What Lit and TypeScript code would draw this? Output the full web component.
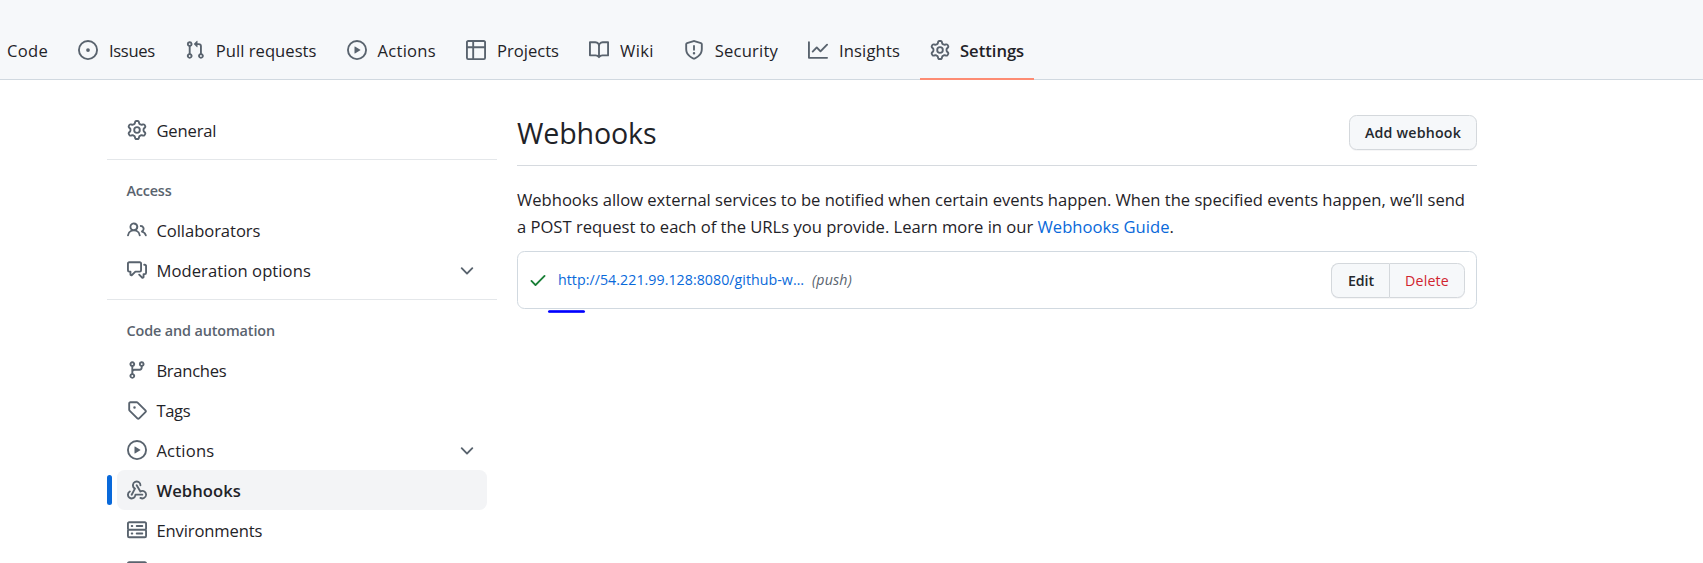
import { LitElement, html, css, svg } from "lit";
import { customElement, property } from "lit/decorators.js";

const ICONS: Record<string, string> = {
  issue: "M8 9.5a1.5 1.5 0 1 0 0-3 1.5 1.5 0 0 0 0 3ZM8 0a8 8 0 1 1 0 16A8 8 0 0 1 8 0ZM1.5 8a6.5 6.5 0 1 0 13 0 6.5 6.5 0 0 0-13 0Z",
  pull: "M1.5 3.25a2.25 2.25 0 1 1 3 2.122v5.256a2.251 2.251 0 1 1-1.5 0V5.372A2.25 2.25 0 0 1 1.5 3.25Zm5.677-.177L9.573.677A.25.25 0 0 1 10 .854V2.5h1A2.5 2.5 0 0 1 13.5 5v5.628a2.251 2.251 0 1 1-1.5 0V5a1 1 0 0 0-1-1h-1v1.646a.25.25 0 0 1-.427.177L7.177 3.427a.25.25 0 0 1 0-.354ZM3.75 2.5a.75.75 0 1 0 0 1.5.75.75 0 0 0 0-1.5Zm0 9.5a.75.75 0 1 0 0 1.5.75.75 0 0 0 0-1.5Zm8.25.75a.75.75 0 1 0 1.5 0 .75.75 0 0 0-1.5 0Z",
  play: "M8 0a8 8 0 1 1 0 16A8 8 0 0 1 8 0ZM1.5 8a6.5 6.5 0 1 0 13 0 6.5 6.5 0 0 0-13 0Zm4.879-2.773 4.264 2.559a.25.25 0 0 1 0 .428l-4.264 2.559A.25.25 0 0 1 6 10.559V5.442a.25.25 0 0 1 .379-.215Z",
  table: "M0 1.75C0 .784.784 0 1.75 0h12.5C15.216 0 16 .784 16 1.75v12.5A1.75 1.75 0 0 1 14.25 16H1.75A1.75 1.75 0 0 1 0 14.25ZM6.5 6.5v8h7.75a.25.25 0 0 0 .25-.25V6.5Zm8-1.5V1.75a.25.25 0 0 0-.25-.25H6.5V5Zm-13 1.5v7.75c0 .138.112.25.25.25H5v-8ZM5 5V1.5H1.75a.25.25 0 0 0-.25.25V5Z",
  book: "M0 1.75A.75.75 0 0 1 .75 1h4.253c1.227 0 2.317.59 3 1.501A3.743 3.743 0 0 1 11.006 1h4.245a.75.75 0 0 1 .75.75v10.5a.75.75 0 0 1-.75.75h-4.507a2.25 2.25 0 0 0-1.591.659l-.622.621a.75.75 0 0 1-1.06 0l-.622-.621A2.25 2.25 0 0 0 5.258 13H.75a.75.75 0 0 1-.75-.75Zm7.251 10.324.004-5.073-.002-2.253A2.25 2.25 0 0 0 5.003 2.5H1.5v9h3.757a3.75 3.75 0 0 1 1.994.574ZM8.755 4.75l-.004 7.322a3.752 3.752 0 0 1 1.992-.572H14.5v-9h-3.495a2.25 2.25 0 0 0-2.25 2.25Z",
  shield: "M7.467.133a1.748 1.748 0 0 1 1.066 0l5.25 1.68A1.75 1.75 0 0 1 15 3.48V7c0 1.566-.32 3.182-1.303 4.682-.983 1.498-2.585 2.813-5.032 3.855a1.697 1.697 0 0 1-1.33 0c-2.447-1.042-4.049-2.357-5.032-3.855C1.32 10.182 1 8.566 1 7V3.48a1.75 1.75 0 0 1 1.217-1.667Zm.61 1.429a.25.25 0 0 0-.153 0l-5.25 1.68a.25.25 0 0 0-.174.238V7c0 1.358.275 2.666 1.057 3.86.784 1.194 2.121 2.34 4.366 3.297a.196.196 0 0 0 .154 0c2.245-.956 3.582-2.104 4.366-3.298C13.225 9.666 13.5 8.36 13.5 7V3.48a.251.251 0 0 0-.174-.237l-5.25-1.68ZM8.75 4.75v3a.75.75 0 0 1-1.5 0v-3a.75.75 0 0 1 1.5 0ZM9 10.5a1 1 0 1 1-2 0 1 1 0 0 1 2 0Z",
  graph: "M1.5 1.75V13.5h13.75a.75.75 0 0 1 0 1.5H.75a.75.75 0 0 1-.75-.75V1.75a.75.75 0 0 1 1.5 0Zm14.28 2.53-5.25 5.25a.75.75 0 0 1-1.06 0L7 7.06 4.28 9.78a.751.751 0 0 1-1.042-.018.751.751 0 0 1-.018-1.042l3.25-3.25a.75.75 0 0 1 1.06 0L10 7.94l4.72-4.72a.751.751 0 0 1 1.042.018.751.751 0 0 1 .018 1.042Z",
  gear: "M8 0a8.2 8.2 0 0 1 .701.031C9.444.095 9.99.645 10.16 1.29l.288 1.107c.018.066.079.158.212.224.231.114.454.243.668.386.123.082.233.09.299.071l1.103-.303c.644-.176 1.392.021 1.82.63.27.385.506.792.704 1.218.315.675.111 1.422-.364 1.891l-.814.806c-.049.048-.098.147-.088.294.016.257.016.515 0 .772-.01.147.038.246.088.294l.814.806c.475.469.679 1.216.364 1.891a7.977 7.977 0 0 1-.704 1.217c-.428.61-1.176.807-1.82.63l-1.102-.302c-.067-.019-.177-.011-.3.071a5.909 5.909 0 0 1-.668.386c-.133.066-.194.158-.211.224l-.29 1.106c-.168.646-.715 1.196-1.458 1.26a8.006 8.006 0 0 1-1.402 0c-.743-.064-1.289-.614-1.458-1.26l-.289-1.106c-.018-.066-.079-.158-.212-.224a5.738 5.738 0 0 1-.668-.386c-.123-.082-.233-.09-.299-.071l-1.103.303c-.644.176-1.392-.021-1.82-.63a8.12 8.12 0 0 1-.704-1.218c-.315-.675-.111-1.422.363-1.891l.815-.806c.05-.048.098-.147.088-.294a6.214 6.214 0 0 1 0-.772c.01-.147-.038-.246-.088-.294l-.815-.806C.635 6.045.431 5.298.746 4.623a7.92 7.92 0 0 1 .704-1.217c.428-.61 1.176-.807 1.82-.63l1.102.302c.067.019.177.011.3-.071.214-.143.437-.272.668-.386.133-.066.194-.158.211-.224l.29-1.106C6.009.645 6.556.095 7.299.03 7.53.01 7.764 0 8 0Zm-.571 1.525c-.036.003-.108.036-.137.146l-.289 1.105c-.147.561-.549.967-.998 1.189-.173.086-.34.183-.5.29-.417.278-.97.423-1.529.27l-1.103-.303c-.109-.03-.175.016-.195.045-.22.312-.412.644-.573.99-.014.031-.021.11.059.19l.815.806c.411.406.562.957.53 1.456a4.709 4.709 0 0 0 0 .582c.032.499-.119 1.05-.53 1.456l-.815.806c-.081.08-.073.159-.059.19.162.346.353.677.573.989.02.03.085.076.195.046l1.102-.303c.56-.153 1.113-.008 1.53.27.161.107.328.204.501.29.447.222.85.629.997 1.189l.289 1.105c.029.109.101.143.137.146a6.6 6.6 0 0 0 1.142 0c.036-.003.108-.036.137-.146l.289-1.105c.147-.561.549-.967.998-1.189.173-.086.34-.183.5-.29.417-.278.97-.423 1.529-.27l1.103.303c.109.029.175-.016.195-.045.22-.313.411-.644.573-.99.014-.031.021-.11-.059-.19l-.815-.806c-.411-.406-.562-.957-.53-1.456a4.709 4.709 0 0 0 0-.582c-.032-.499.119-1.05.53-1.456l.815-.806c.081-.08.073-.159.059-.19a6.464 6.464 0 0 0-.573-.989c-.02-.03-.085-.076-.195-.046l-1.102.303c-.56.153-1.113.008-1.53-.27a4.44 4.44 0 0 0-.501-.29c-.447-.222-.85-.629-.997-1.189l-.289-1.105c-.029-.11-.101-.143-.137-.146a6.6 6.6 0 0 0-1.142 0ZM11 8a3 3 0 1 1-6 0 3 3 0 0 1 6 0ZM9.5 8a1.5 1.5 0 1 0-3.001.001A1.5 1.5 0 0 0 9.5 8Z",
  people: "M2 5.5a3.5 3.5 0 1 1 5.898 2.549 5.508 5.508 0 0 1 3.034 4.084.75.75 0 1 1-1.482.235 4 4 0 0 0-7.9 0 .75.75 0 0 1-1.482-.236A5.507 5.507 0 0 1 3.102 8.05 3.493 3.493 0 0 1 2 5.5ZM11 4a3.001 3.001 0 0 1 2.22 5.018 5.01 5.01 0 0 1 2.56 3.012.749.749 0 0 1-.885.954.752.752 0 0 1-.549-.514 3.507 3.507 0 0 0-2.522-2.372.75.75 0 0 1-.574-.73v-.352a.75.75 0 0 1 .416-.672A1.5 1.5 0 0 0 11 5.5.75.75 0 0 1 11 4Zm-5.5-.5a2 2 0 1 0-.001 3.999A2 2 0 0 0 5.5 3.5Z",
  discussion: "M1.75 1h8.5c.966 0 1.75.784 1.75 1.75v5.5A1.75 1.75 0 0 1 10.25 10H7.061l-2.574 2.573A1.458 1.458 0 0 1 2 11.543V10h-.25A1.75 1.75 0 0 1 0 8.25v-5.5C0 1.784.784 1 1.75 1ZM1.5 2.75v5.5c0 .138.112.25.25.25h1a.75.75 0 0 1 .75.75v2.19l2.72-2.72a.749.749 0 0 1 .53-.22h3.5a.25.25 0 0 0 .25-.25v-5.5a.25.25 0 0 0-.25-.25h-8.5a.25.25 0 0 0-.25.25Zm13 2a.25.25 0 0 0-.25-.25h-.5a.75.75 0 0 1 0-1.5h.5c.966 0 1.75.784 1.75 1.75v5.5A1.75 1.75 0 0 1 14.25 12H14v1.543a1.458 1.458 0 0 1-2.487 1.03L9.22 12.28a.749.749 0 0 1 .326-1.275.749.749 0 0 1 .734.215l2.22 2.22v-2.19a.75.75 0 0 1 .75-.75h1a.25.25 0 0 0 .25-.25Z",
  branch: "M9.5 3.25a2.25 2.25 0 1 1 3 2.122V6A2.5 2.5 0 0 1 10 8.5H6a1 1 0 0 0-1 1v1.128a2.251 2.251 0 1 1-1.5 0V5.372a2.25 2.25 0 1 1 1.5 0v1.836A2.493 2.493 0 0 1 6 7h4a1 1 0 0 0 1-1v-.628A2.25 2.25 0 0 1 9.5 3.25Zm-6 0a.75.75 0 1 0 1.5 0 .75.75 0 0 0-1.5 0Zm8.25-.75a.75.75 0 1 0 0 1.5.75.75 0 0 0 0-1.5ZM4.25 12a.75.75 0 1 0 0 1.5.75.75 0 0 0 0-1.5Z",
  tag: "M1 7.775V2.75C1 1.784 1.784 1 2.75 1h5.025c.464 0 .91.184 1.238.513l6.25 6.25a1.75 1.75 0 0 1 0 2.474l-5.026 5.026a1.75 1.75 0 0 1-2.474 0l-6.25-6.25A1.752 1.752 0 0 1 1 7.775Zm1.5 0c0 .066.026.13.073.177l6.25 6.25a.25.25 0 0 0 .354 0l5.025-5.025a.25.25 0 0 0 0-.354l-6.25-6.25a.25.25 0 0 0-.177-.073H2.75a.25.25 0 0 0-.25.25ZM6 5a1 1 0 1 1 0 2 1 1 0 0 1 0-2Z",
  webhook: "M5.5 4.25a2.25 2.25 0 0 1 4.5 0 .75.75 0 0 0 1.5 0 3.75 3.75 0 1 0-6.14 2.889l-2.272 4.258a.75.75 0 0 0 1.324.706L7 7.25a.75.75 0 0 0-.309-1.015A2.25 2.25 0 0 1 5.5 4.25ZM7.364 3.607a.75.75 0 0 1 1.03.257l2.608 4.349a3.75 3.75 0 1 1-.628 6.785.75.75 0 0 1 .752-1.299 2.25 2.25 0 1 0-.033-3.88.75.75 0 0 1-1.03-.256L7.107 4.636a.75.75 0 0 1 .257-1.03ZM2.9 8.776A.75.75 0 0 1 2.625 9.8 2.25 2.25 0 1 0 6 11.75a.75.75 0 0 1 .75-.751h5.5a.75.75 0 0 1 0 1.5H7.425a3.751 3.751 0 1 1-5.55-3.998.75.75 0 0 1 1.024.274Z",
  server: "M1.75 1h12.5c.966 0 1.75.784 1.75 1.75v4c0 .372-.116.717-.314 1 .198.283.314.628.314 1v4a1.75 1.75 0 0 1-1.75 1.75H1.75A1.75 1.75 0 0 1 0 12.75v-4c0-.358.109-.707.314-1a1.739 1.739 0 0 1-.314-1v-4C0 1.784.784 1 1.75 1ZM1.5 2.75v4c0 .138.112.25.25.25h12.5a.25.25 0 0 0 .25-.25v-4a.25.25 0 0 0-.25-.25H1.75a.25.25 0 0 0-.25.25Zm.25 5.75a.25.25 0 0 0-.25.25v4c0 .138.112.25.25.25h12.5a.25.25 0 0 0 .25-.25v-4a.25.25 0 0 0-.25-.25ZM7 4.75A.75.75 0 0 1 7.75 4h4.5a.75.75 0 0 1 0 1.5h-4.5A.75.75 0 0 1 7 4.75ZM7.75 10h4.5a.75.75 0 0 1 0 1.5h-4.5a.75.75 0 0 1 0-1.5ZM3 4.75A.75.75 0 0 1 3.75 4h.5a.75.75 0 0 1 0 1.5h-.5A.75.75 0 0 1 3 4.75ZM3.75 10h.5a.75.75 0 0 1 0 1.5h-.5a.75.75 0 0 1 0-1.5Z",
  browser: "M0 2.75C0 1.784.784 1 1.75 1h12.5c.966 0 1.75.784 1.75 1.75v10.5A1.75 1.75 0 0 1 14.25 15H1.75A1.75 1.75 0 0 1 0 13.25ZM14.5 6h-13v7.25c0 .138.112.25.25.25h12.5a.25.25 0 0 0 .25-.25Z",
  chevron: "M12.78 5.22a.749.749 0 0 1 0 1.06l-4.25 4.25a.749.749 0 0 1-1.06 0L3.22 6.28a.749.749 0 1 1 1.06-1.06L8 8.939l3.72-3.719a.749.749 0 0 1 1.06 0Z",
  check: "M13.78 4.22a.75.75 0 0 1 0 1.06l-7.25 7.25a.75.75 0 0 1-1.06 0L2.22 9.28a.751.751 0 0 1 .018-1.042.751.751 0 0 1 1.042-.018L6 10.94l6.72-6.72a.75.75 0 0 1 1.06 0Z",
};

const icon = (name: string, cls = "") => html`
  <svg class="icon ${cls}" viewBox="0 0 16 16" aria-hidden="true">${svg`<path d=${ICONS[name]}></path>`}</svg>`;

/** A single line of text tracked so that it fills exactly the given width. */
@customElement("fit-text")
class FitText extends LitElement {
  @property({ type: Number }) width = 0;
  @property() text = "";

  static styles = css`
    :host { display: inline-block; white-space: pre; }
    .run { display: inline-block; }
  `;

  updated() {
    const run = this.renderRoot.querySelector<HTMLElement>(".run")!;
    run.style.letterSpacing = "0px";
    const natural = run.getBoundingClientRect().width;
    run.style.letterSpacing = `${(this.width - natural) / this.text.length}px`;
  }

  render() {
    return html`<span class="run">${this.text}</span>`;
  }
}

const fit = (text: string, width: number) => html`<fit-text .text=${text} .width=${width}></fit-text>`;

type Entry = { icon?: string; label?: string; width?: number; active?: boolean; expands?: boolean };

const TABS: Entry[] = [
  { label: "Code", width: 41 },
  { icon: "issue", label: "Issues", width: 45.8 },
  { icon: "pull", label: "Pull requests", width: 100.7 },
  { icon: "play", label: "Actions", width: 58.5 },
  { icon: "table", label: "Projects", width: 62 },
  { icon: "book", label: "Wiki", width: 33.7 },
  { icon: "shield", label: "Security", width: 63.3 },
  { icon: "graph", label: "Insights", width: 61 },
  { icon: "gear", label: "Settings", width: 64.2, active: true },
];

const SECTIONS: { title?: string; titleWidth?: number; items: Entry[] }[] = [
  { items: [{ icon: "gear", label: "General", width: 60 }] },
  {
    title: "Access",
    titleWidth: 45,
    items: [
      { icon: "people", label: "Collaborators", width: 104 },
      { icon: "discussion", label: "Moderation options", width: 154.5, expands: true },
    ],
  },
  {
    title: "Code and automation",
    titleWidth: 148.5,
    items: [
      { icon: "branch", label: "Branches", width: 70 },
      { icon: "tag", label: "Tags", width: 34 },
      { icon: "play", label: "Actions", width: 58, expands: true },
      { icon: "webhook", label: "Webhooks", width: 84.5, active: true },
      { icon: "server", label: "Environments", width: 106 },
      { icon: "browser" },
    ],
  },
];

@customElement("app-root")
class AppRoot extends LitElement {
  static styles = css`
    :host {
      display: block;
      height: 563px;
      overflow: hidden;
      background: #fff;
      color: #1f2328;
      font: 400 16.6px/26px "Open Sans", "Noto Sans", sans-serif;
    }
    .icon { width: 20px; height: 20px; flex: none; fill: #59636e; display: block; }
    .tabs {
      box-sizing: border-box;
      height: 80px;
      display: flex;
      align-items: flex-end;
      gap: 10px;
      padding-left: 7px;
      background: #f6f8fa;
      border-bottom: 1px solid #d1d9e0;
    }
    .tab {
      box-sizing: border-box;
      height: 58px;
      display: flex;
      align-items: center;
      gap: 11px;
      padding: 0 10px;
      margin-bottom: -1px;
      border-bottom: 2px solid transparent;
    }
    .tab:first-child { padding-left: 0; }
    .tab.active { gap: 10px; font-weight: 600; border-color: #fd8c73; }
    .tab fit-text, .link fit-text { padding-top: 1px; }
    .page { display: flex; gap: 20px; padding-left: 107px; }
    .side { width: 390px; padding-top: 30px; }
    .section + .section { border-top: 1px solid #e4e7ea; margin-top: 9px; padding-top: 10px; }
    .heading {
      height: 40px;
      padding-left: 19.5px;
      font-size: 14.4px;
      font-weight: 600;
      line-height: 41px;
      color: #59636e;
    }
    .item { display: flex; height: 40px; }
    .marker { width: 5px; height: 30px; margin: 5px 5px 0 0; border-radius: 5px; }
    .link {
      flex: none;
      box-sizing: border-box;
      width: 370px;
      display: flex;
      align-items: center;
      gap: 9.4px;
      padding: 0 10px;
      border-radius: 7.5px;
    }
    .item.active .marker { background: #0969da; }
    .item.active .link { background: #f3f4f6; font-weight: 600; }
    .end { margin: 2px 0 0 auto; }
    .main { width: 960px; padding-top: 35px; }
    .head {
      box-sizing: border-box;
      height: 51px;
      display: flex;
      justify-content: space-between;
      align-items: flex-start;
      border-bottom: 1px solid #d6dadf;
    }
    .title { margin: 0; font-size: 28.6px; font-weight: 400; line-height: 35px; }
    .button {
      box-sizing: border-box;
      height: 35px;
      padding: 0 15px;
      border: 1px solid #d4d8dc;
      border-radius: 7.5px;
      background: #f6f8fa;
      box-shadow: 0 1px 0 rgba(31, 35, 40, 0.04);
      color: #25292e;
      font: 600 14.2px/33px "Open Sans", "Noto Sans", sans-serif;
    }
    .intro { margin: 20px 0 11px; line-height: 27px; }
    .intro-line { display: block; height: 27px; }
    .blue { color: #0969da; }
    .hook {
      box-sizing: border-box;
      height: 58px;
      display: flex;
      align-items: center;
      padding: 0 11px 0 10px;
      border: 1px solid #d1d9e0;
      border-radius: 7.5px;
      font-size: 14.2px;
    }
    .icon.ok { fill: #1a7f37; margin-right: 10px; }
    .event { margin-left: 8px; color: #59636e; font-style: italic; }
    .group { display: flex; margin-left: auto; }
    .left { border-radius: 7.5px 0 0 7.5px; border-right: 0; padding-left: 16px; }
    .right { border-radius: 0 7.5px 7.5px 0; color: #d1242f; font-weight: 500; }
    .underline { width: 37px; height: 3px; margin: 1px 0 0 31px; border-radius: 1.5px; background: linear-gradient(#5555ff, #0000ff 34% 66%, #5555ff); }
  `;

  private item(e: Entry) {
    return html`<div class="item ${e.active ? "active" : ""}">
      <span class="marker"></span>
      <div class="link">
        ${icon(e.icon!)}${e.label ? fit(e.label, e.width!) : ""}${e.expands ? icon("chevron", "end") : ""}
      </div>
    </div>`;
  }

  render() {
    return html`
      <nav class="tabs">
        ${TABS.map((t) => html`<div class="tab ${t.active ? "active" : ""}">
          ${t.icon ? icon(t.icon) : ""}${fit(t.label!, t.width!)}
        </div>`)}
      </nav>
      <div class="page">
        <aside class="side">
          ${SECTIONS.map((s) => html`<div class="section">
            ${s.title ? html`<div class="heading">${fit(s.title, s.titleWidth!)}</div>` : ""}
            ${s.items.map((e) => this.item(e))}
          </div>`)}
        </aside>
        <main class="main">
          <div class="head">
            <h2 class="title">${fit("Webhooks", 139.5)}</h2>
            <button class="button">${fit("Add webhook", 96)}</button>
          </div>
          <p class="intro">
            <span class="intro-line">${fit("Webhooks allow external services to be notified when certain events happen. When the specified events happen, we’ll send", 948)}</span>
            <span class="intro-line">${fit("a POST request to each of the URLs you provide. Learn more in our ", 520.5)}<a class="blue">${fit("Webhooks Guide", 132)}</a>.</span>
          </p>
          <div class="hook">
            ${icon("check", "ok")}
            <a class="blue">${fit("http://54.221.99.128:8080/github-w…", 246)}</a>
            <span class="event">${fit("(push)", 40)}</span>
            <div class="group">
              <button class="button left">${fit("Edit", 26)}</button>
              <button class="button right">${fit("Delete", 44)}</button>
            </div>
          </div>
          <div class="underline"></div>
        </main>
      </div>
    `;
  }
}
